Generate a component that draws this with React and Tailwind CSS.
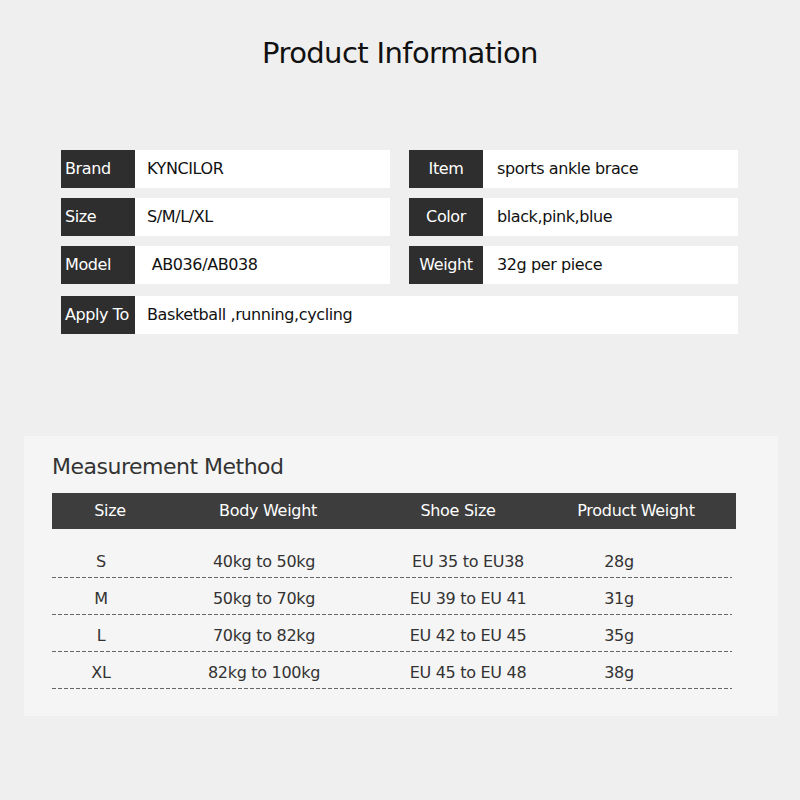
import React from 'react';

const info = [
  [['Brand', 'KYNCILOR', 'left'], ['Item', 'sports ankle brace', 'center']],
  [['Size', 'S/M/L/XL', 'left'], ['Color', 'black,pink,blue', 'center']],
  [['Model', ' AB036/AB038', 'left'], ['Weight', '32g per piece', 'center']],
];

const rows = [
  ['S', '40kg to 50kg', 'EU 35 to EU38', '28g'],
  ['M', '50kg to 70kg', 'EU 39 to EU 41', '31g'],
  ['L', '70kg to 82kg', 'EU 42 to EU 45', '35g'],
  ['XL', '82kg to 100kg', 'EU 45 to EU 48', '38g'],
];

function Cell({ label, value, align, wide }) {
  return (
    <div className={'flex h-[38px] ' + (wide ? 'w-[677px] mt-[2px]' : 'w-[329px]')}>
      <div
        className={
          'w-[74px] shrink-0 bg-[#2e2e2e] text-white flex items-center ' +
          (align === 'center' ? 'justify-center' : 'pl-[4px]')
        }
      >
        {label}
      </div>
      <div className={'flex-1 bg-white flex items-center text-[#111] whitespace-pre ' + (align === 'center' ? 'pl-[14px]' : 'pl-[12px]')}>{value}</div>
    </div>
  );
}

function Dashed() {
  return (
    <div className="h-px w-[680px] bg-[repeating-linear-gradient(to_right,#666_0,#666_4px,transparent_4px,transparent_6px)]" />
  );
}

export default function App() {
  return (
    <div className="w-[800px] h-[800px] bg-[#efefef] font-['DejaVu_Sans',sans-serif] overflow-hidden">
      <h1 className="text-[29px] text-[#111] text-center pt-[32px] h-[110px] tracking-[-0.6px]">Product Information</h1>

      <div className="pl-[61px] pt-[40px] flex flex-col gap-[10px] text-[16px] tracking-[-0.4px]">
        {info.map((r, i) => (
          <div key={i} className="flex gap-[19px]">
            <Cell label={r[0][0]} value={r[0][1]} align={r[0][2]} />
            <Cell label={r[1][0]} value={r[1][1]} align={r[1][2]} />
          </div>
        ))}
        <Cell label="Apply To" value="Basketball ,running,cycling" align="left" wide />
      </div>

      <div className="mt-[102px] ml-[24px] w-[754px] h-[280px] bg-[#f5f5f5] pl-[28px] pt-[14px] text-[#333]">
        <h2 className="text-[22px] tracking-[-0.5px] h-[43px]">Measurement Method</h2>
        <div className="w-[684px] h-[36px] bg-[#3d3d3d] text-white text-[16px] tracking-[-0.3px] grid grid-cols-[116px_200px_180px_176px] items-center text-center">
          <span>Size</span>
          <span>Body Weight</span>
          <span>Shoe Size</span>
          <span>Product Weight</span>
        </div>
        <div className="pt-[12px] text-[16px] tracking-[-0.3px]">
          {rows.map((r, i) => (
            <div key={i}>
              <div className="h-[36px] pb-[3px] grid grid-cols-[98px_228px_180px_122px] items-end text-center">
                <span>{r[0]}</span>
                <span>{r[1]}</span>
                <span>{r[2]}</span>
                <span>{r[3]}</span>
              </div>
              <Dashed />
            </div>
          ))}
        </div>
      </div>
    </div>
  );
}
